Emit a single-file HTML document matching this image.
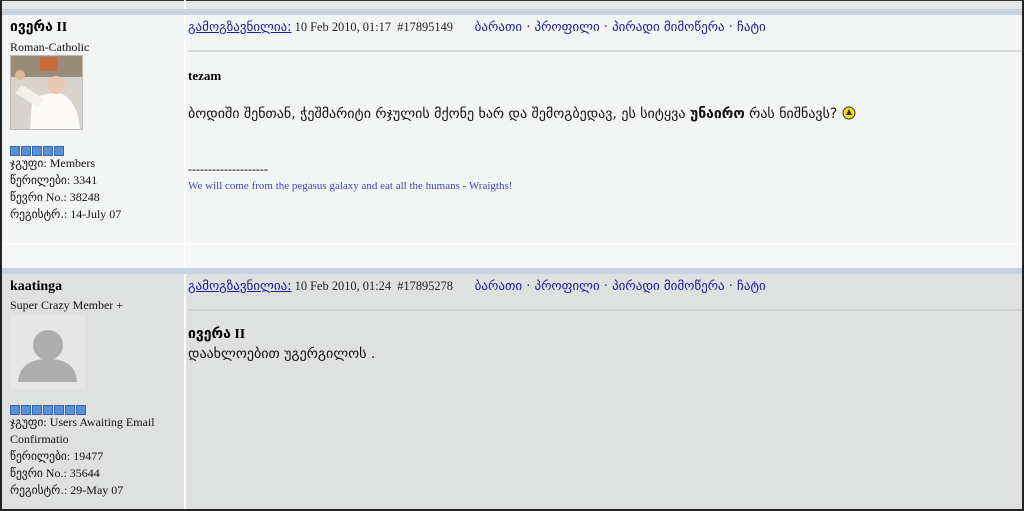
<!DOCTYPE html>
<html><head><meta charset="utf-8"><style>
body{margin:0;width:1024px;height:511px;overflow:hidden;background:#fff;font-family:"Liberation Serif","DejaVu Sans",serif;position:relative}
.a{position:absolute}
.geo{font-family:"DejaVu Sans",sans-serif}
a{color:#2222aa;text-decoration:underline}
.t{font-size:12px;color:#111;line-height:17px}
.g{font-family:"DejaVu Sans",sans-serif;font-size:11.5px}
.hd{font-size:12.4px;color:#222}
.hd a{color:#1a1a9a}
.bar{position:absolute;left:0;width:1024px;background:#c6d3e1}
</style></head><body>
<div class="a" style="left:0;top:0;width:1024px;height:9px;background:#e6e7e8;border-top:1px solid #333;box-sizing:border-box"></div>
<div class="a" style="left:184px;top:0;width:2px;height:9px;background:#fff"></div>
<div class="bar" style="top:9px;height:6px"></div>
<div class="a" style="left:0;top:15px;width:1024px;height:228px;background:#f3f5f5"></div>
<div class="a" style="left:0;top:243px;width:1024px;height:25px;background:#f5f6f6;border-top:1px solid #fff"></div>
<div class="a" style="left:184px;top:15px;width:2px;height:253px;background:#fff"></div>
<div class="bar" style="top:268px;height:6px"></div>
<div class="a" style="left:0;top:274px;width:1024px;height:235px;background:#dfe0e0"></div>
<div class="a" style="left:184px;top:274px;width:2px;height:235px;background:#fff"></div>
<div class="a" style="left:0;top:0;width:2px;height:511px;background:#222"></div>
<div class="a" style="left:1022px;top:0;width:2px;height:511px;background:#222"></div>
<div class="a" style="left:0;top:509px;width:1024px;height:2px;background:#222"></div>

<div class="a" style="left:10px;top:19px;font-size:14px;font-weight:bold"><span class="geo" style="font-size:14px">ივერა</span> II</div>
<div class="a t" style="left:10px;top:39px">Roman-Catholic</div>
<svg class="a" style="left:10px;top:55px" width="73" height="75"><rect width="73" height="75" fill="#d8d4cc"/><rect x="0" y="0" width="73" height="22" fill="#9a8c7a"/><rect x="30" y="2" width="18" height="14" fill="#c86a3a"/><path d="M20 75L22 45Q30 38 50 38Q68 45 70 75Z" fill="#fbfaf6"/><circle cx="46" cy="30" r="9" fill="#e8c8b0"/><path d="M5 38L12 30L34 44L28 52Z" fill="#f2f0ea"/><circle cx="10" cy="20" r="5" fill="#e0b898"/><rect x="0.5" y="0.5" width="72" height="74" fill="none" stroke="#bbb"/></svg>
<div class="a" style="left:10px;top:146px;display:flex;gap:1px"><i style="width:8px;height:8px;background:#5b8fd8;border:1px solid #3566b0"></i><i style="width:8px;height:8px;background:#5b8fd8;border:1px solid #3566b0"></i><i style="width:8px;height:8px;background:#5b8fd8;border:1px solid #3566b0"></i><i style="width:8px;height:8px;background:#5b8fd8;border:1px solid #3566b0"></i><i style="width:8px;height:8px;background:#5b8fd8;border:1px solid #3566b0"></i></div>
<div class="a t" style="left:10px;top:155px"><span class="g">ჯგუფი</span>: Members<br><span class="g">წერილები</span>: 3341<br><span class="g">წევრი</span> No.: 38248<br><span class="g">რეგისტრ.</span>: 14-July 07</div>

<div class="a hd" style="left:188px;top:20px;white-space:nowrap"><a class="geo" style="font-size:13px">გამოგზავნილია:</a> 10 Feb 2010, 01:17 &nbsp;#17895149 &nbsp;&nbsp;&nbsp;&nbsp;&nbsp;&nbsp;<span class="geo" style="font-size:13px;color:#1a1a9a">ბარათი · პროფილი · პირადი მიმოწერა · ჩატი</span></div>
<div class="a" style="left:188px;top:50px;width:834px;height:2px;background:#d8dada"></div>
<div class="a" style="left:188px;top:68px;font-size:13px;font-weight:bold">tezam</div>
<div class="a geo" style="left:188px;top:106px;font-size:14px;color:#111;white-space:nowrap">ბოდიში შენთან, ჭეშმარიტი რჯულის მქონე ხარ და შემოგბედავ, ეს სიტყვა <b>უნაირო</b> რას ნიშნავს? <svg width="14" height="14" style="vertical-align:-2px"><circle cx="7" cy="7" r="6" fill="#f0e020" stroke="#333"/><path d="M7 3L10 9H4Z" fill="#333"/></svg></div>
<div class="a" style="left:188px;top:162px;font-size:12px">--------------------</div>
<div class="a" style="left:188px;top:180px;font-size:11px;color:#4444aa">We will come from the pegasus galaxy and eat all the humans - Wraigths!</div>

<div class="a" style="left:10px;top:279px;font-size:14px;font-weight:bold">kaatinga</div>
<div class="a t" style="left:10px;top:297px">Super Crazy Member +</div>
<svg class="a" style="left:10px;top:315px" width="75" height="74"><rect width="75" height="74" fill="#e6e6e6"/><circle cx="38" cy="30" r="15" fill="#adadad"/><path d="M8 67Q10 44 38 44Q66 44 67 67Z" fill="#adadad"/></svg>
<div class="a" style="left:10px;top:405px;display:flex;gap:1px"><i style="width:8px;height:8px;background:#5b8fd8;border:1px solid #3566b0"></i><i style="width:8px;height:8px;background:#5b8fd8;border:1px solid #3566b0"></i><i style="width:8px;height:8px;background:#5b8fd8;border:1px solid #3566b0"></i><i style="width:8px;height:8px;background:#5b8fd8;border:1px solid #3566b0"></i><i style="width:8px;height:8px;background:#5b8fd8;border:1px solid #3566b0"></i><i style="width:8px;height:8px;background:#5b8fd8;border:1px solid #3566b0"></i><i style="width:8px;height:8px;background:#5b8fd8;border:1px solid #3566b0"></i></div>
<div class="a t" style="left:10px;top:414px"><span class="g">ჯგუფი</span>: Users Awaiting Email<br>Confirmatio<br><span class="g">წერილები</span>: 19477<br><span class="g">წევრი</span> No.: 35644<br><span class="g">რეგისტრ.</span>: 29-May 07</div>

<div class="a hd" style="left:188px;top:279px;white-space:nowrap"><a class="geo" style="font-size:13px">გამოგზავნილია:</a> 10 Feb 2010, 01:24 &nbsp;#17895278 &nbsp;&nbsp;&nbsp;&nbsp;&nbsp;&nbsp;<span class="geo" style="font-size:13px;color:#1a1a9a">ბარათი · პროფილი · პირადი მიმოწერა · ჩატი</span></div>
<div class="a" style="left:188px;top:309px;width:834px;height:2px;background:#cfd0d0"></div>
<div class="a" style="left:188px;top:326px;font-size:14px;font-weight:bold"><span class="geo" style="font-size:14px">ივერა</span> II</div>
<div class="a geo" style="left:188px;top:346px;font-size:14px;color:#111">დაახლოებით უგერგილოს .</div>
</body></html>
